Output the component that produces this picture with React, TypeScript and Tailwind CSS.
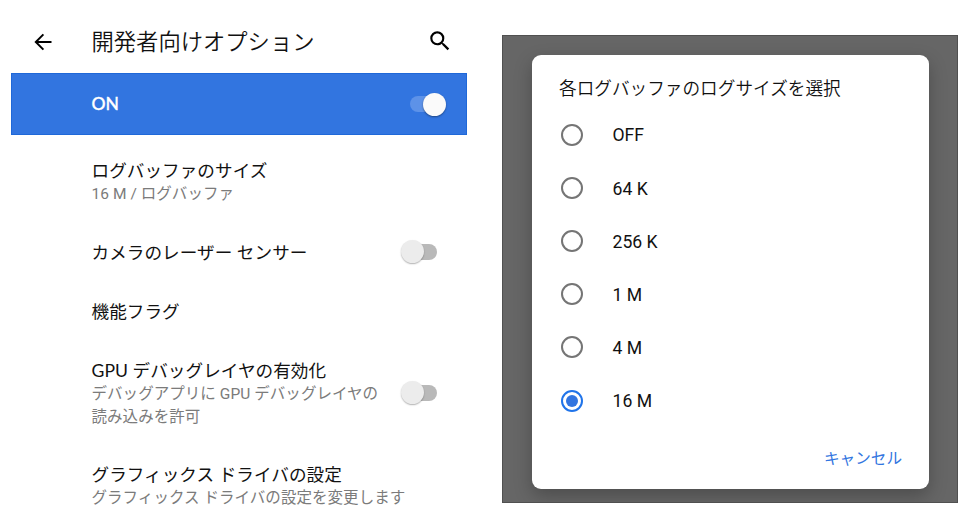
import type { ReactNode } from "react";

const items: { title: string; summary?: ReactNode; toggle?: boolean }[] = [
  { title: "ログバッファのサイズ", summary: "16 M / ログバッファ" },
  { title: "カメラのレーザー センサー", toggle: true },
  { title: "機能フラグ" },
  {
    title: "GPU デバッグレイヤの有効化",
    summary: (
      <>
        デバッグアプリに GPU デバッグレイヤの
        <br />
        読み込みを許可
      </>
    ),
    toggle: true,
  },
  { title: "グラフィックス ドライバの設定", summary: "グラフィックス ドライバの設定を変更します" },
];

const sizes = ["OFF", "64 K", "256 K", "1 M", "4 M", "16 M"];

function OffSwitch() {
  return (
    <span className="-mt-[2px] mr-[30px] flex w-[36px] shrink-0 items-center">
      <span className="z-10 size-[23px] shrink-0 rounded-full bg-[#ececec] shadow-[0_1px_1.5px_rgba(0,0,0,0.3)]" />
      <span className="-ml-[17px] h-[16px] w-[30px] shrink-0 rounded-full bg-[#b9b9b9]" />
    </span>
  );
}

function Radio({ checked }: { checked: boolean }) {
  return (
    <span
      className={
        checked
          ? "flex size-[22px] items-center justify-center rounded-full border-2 border-[#2074ea]"
          : "flex size-[22px] items-center justify-center rounded-full border-2 border-[#757575]"
      }
    >
      {checked && <span className="size-[12px] rounded-full bg-[#3275e0]" />}
    </span>
  );
}

export default function App() {
  return (
    <div className="flex h-[523px] w-[971px] overflow-hidden bg-white font-[Roboto,'Noto_Sans_CJK_JP',sans-serif] text-[#111]">
      <section className="ml-[11px] w-[456px] shrink-0">
        <header className="flex h-[73px] items-center pt-[11px]">
          <svg className="ml-[19.5px] size-[24px]" viewBox="0 0 24 24" fill="#000">
            <path d="M20.5 11H7.2l5.9-5.9L11.7 3.7 3.4 12l8.3 8.3 1.4-1.4L7.2 13h13.3z" />
          </svg>
          <h1 className="ml-[37px] text-[22.3px] leading-[30px] font-[350] whitespace-nowrap">開発者向けオプション</h1>
          <svg className="mr-[14px] mb-[2px] ml-auto size-[26px]" viewBox="0 0 24 24" fill="#000">
            <path d="M15.5 14h-.79l-.28-.27A6.471 6.471 0 0 0 16 9.5 6.5 6.5 0 1 0 9.5 16c1.61 0 3.09-.59 4.23-1.57l.27.28v.79l5 4.99L20.49 19l-4.99-5zm-6 0C7.01 14 5 11.99 5 9.5S7.01 5 9.5 5 14 7.01 14 9.5 11.99 14 9.5 14z" />
          </svg>
        </header>
        <div className="flex h-[62px] items-center justify-between border border-[#1f68d8] bg-[#3275e0] pr-[20.5px] pl-[79.5px]">
          <span className="pt-px font-[Lato] text-[17.5px] font-medium text-white [-webkit-text-stroke:0.3px_white]">ON</span>
          <span className="flex items-center">
            <span className="h-[16px] w-[30px] rounded-full bg-[#5d92e8]" />
            <span className="-ml-[17px] size-[23px] rounded-full bg-[#fafafa] shadow-[0_1px_2px_rgba(0,0,0,0.4)]" />
          </span>
        </div>
        <div className="flex flex-col gap-[35.2px] pt-[24px]">
          {items.map((item) => (
            <div key={item.title} className="flex items-center justify-between pl-[80.5px]">
              <div className="whitespace-nowrap">
                <div className="font-[Lato,'Noto_Sans_CJK_JP'] text-[17.6px] leading-[24px] tracking-[0.05px]">{item.title}</div>
                {item.summary && (
                  <div className="text-[15.5px] leading-[22.5px] tracking-[0.05px] text-[#7b7b7b]">{item.summary}</div>
                )}
              </div>
              {item.toggle && <OffSwitch />}
            </div>
          ))}
        </div>
      </section>

      <section className="mt-[35px] ml-[35px] h-[468px] w-[456px] shrink-0 overflow-hidden border border-[#505050] bg-[#666]">
        <div className="mt-[19px] ml-[29px] flex h-[434px] w-[397px] flex-col rounded-[9px] bg-white shadow-[0_7px_18px_rgba(0,0,0,0.25)]">
          <h2 className="mt-[21px] ml-[27px] text-[17.65px] leading-[26px] font-[350] whitespace-nowrap">
            各ログバッファのログサイズを選択
          </h2>
          <div className="mt-[6px] flex flex-col">
            {sizes.map((size) => (
              <div key={size} className="flex h-[53.2px] items-center gap-[29.5px] pl-[29px] text-[17.6px]">
                <Radio checked={size === "16 M"} />
                <span className="pt-[2px]">{size}</span>
              </div>
            ))}
          </div>
          <button className="mt-[20px] mr-[27px] self-end text-[15.6px] leading-[24px] text-[#3275e0]">
            キャンセル
          </button>
        </div>
      </section>
    </div>
  );
}
